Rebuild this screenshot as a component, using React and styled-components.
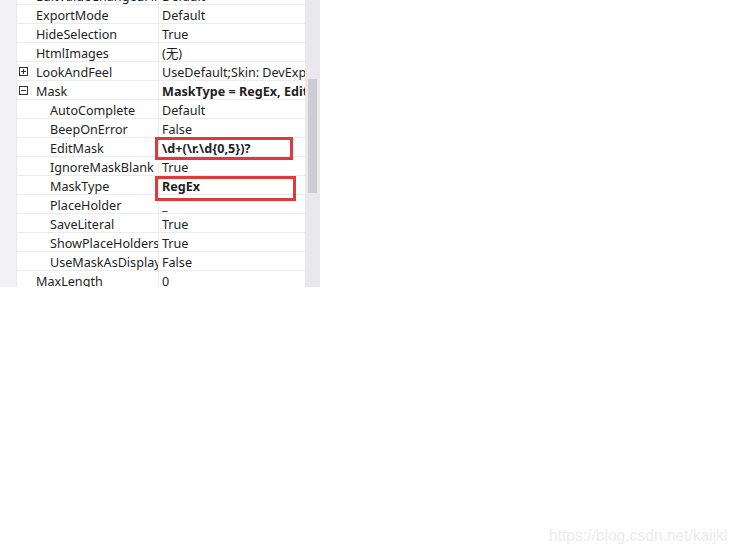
import React from 'react';
import styled, { createGlobalStyle } from 'styled-components';

const GlobalStyle = createGlobalStyle`
  html, body {
    margin: 0;
    padding: 0;
    background: #ffffff;
  }
  body {
    width: 738px;
    height: 554px;
    overflow: hidden;
    position: relative;
    font-family: "Noto Sans", "Noto Sans CJK SC", sans-serif;
  }
`;

const Panel = styled.div`
  position: relative;
  width: 320px;
  height: 287px;
  display: flex;
  overflow: hidden;
  background: #ffffff;
`;

const Grid = styled.div`
  flex: 1;
  overflow: hidden;
  background: linear-gradient(to right, #f3f3f6 0, #f3f3f6 16px, #e9e9ec 16px, #e9e9ec 17px, transparent 17px);
`;

const List = styled.div`
  margin-top: -14px;
  display: flex;
  flex-direction: column;
`;

const Row = styled.div`
  display: flex;
  height: 19px;
  box-sizing: border-box;
  font-size: 12.6px;
  line-height: 17px;
  color: #1e1e1e;
`;

const Toggle = styled.div`
  width: 17px;
  flex-shrink: 0;
`;

const Name = styled.div`
  width: 142px;
  flex-shrink: 0;
  box-sizing: border-box;
  padding: 2px 0 0 ${({ $indent }) => ($indent ? 33 : 19)}px;
  border-bottom: 1px solid #ececee;
  border-right: 1px solid #ececee;
  white-space: nowrap;
  overflow: hidden;
  position: relative;
`;

const Value = styled.div`
  flex: 1;
  box-sizing: border-box;
  padding: 2px 0 0 3px;
  border-bottom: 1px solid #ececee;
  white-space: nowrap;
  overflow: hidden;
  font-weight: ${({ $bold }) => ($bold ? 700 : 400)};
`;

const ExpandBox = styled.span`
  position: absolute;
  left: 2px;
  top: 5px;
  width: 9px;
  height: 9px;
  box-sizing: border-box;
  border: 1px solid #333;
  &::before {
    content: '';
    position: absolute;
    left: 1px;
    right: 1px;
    top: 3px;
    height: 1px;
    background: #333;
  }
  &::after {
    content: '';
    display: ${({ $open }) => ($open ? 'none' : 'block')};
    position: absolute;
    top: 1px;
    bottom: 1px;
    left: 3px;
    width: 1px;
    background: #333;
  }
`;

const Scrollbar = styled.div`
  width: 15px;
  flex-shrink: 0;
  background: #e9e9ec;
  padding-top: 79px;
  display: flex;
  justify-content: center;
`;

const Thumb = styled.div`
  width: 9px;
  height: 114px;
  background: #cdcdd1;
`;

const Highlight = styled.div`
  position: absolute;
  box-sizing: border-box;
  border: 3px solid #e0393c;
`;

const Watermark = styled.div`
  position: absolute;
  left: 549px;
  top: 527px;
  font-family: "Liberation Sans", Arial, sans-serif;
  font-size: 15.6px;
  color: #ececec;
`;

const rows = [
  { name: 'EditValueChangedFiringMode', value: 'Default' },
  { name: 'ExportMode', value: 'Default' },
  { name: 'HideSelection', value: 'True' },
  { name: 'HtmlImages', value: '(无)' },
  { name: 'LookAndFeel', value: 'UseDefault;Skin: DevExpress Style', toggle: 'closed' },
  { name: 'Mask', value: 'MaskType = RegEx, EditMask = \\d+(\\r.\\d{0,5})?', toggle: 'open', bold: true },
  { name: 'AutoComplete', value: 'Default', indent: true },
  { name: 'BeepOnError', value: 'False', indent: true },
  { name: 'EditMask', value: '\\d+(\\r.\\d{0,5})?', indent: true, bold: true },
  { name: 'IgnoreMaskBlank', value: 'True', indent: true },
  { name: 'MaskType', value: 'RegEx', indent: true, bold: true },
  { name: 'PlaceHolder', value: '_', indent: true },
  { name: 'SaveLiteral', value: 'True', indent: true },
  { name: 'ShowPlaceHolders', value: 'True', indent: true },
  { name: 'UseMaskAsDisplayFormat', value: 'False', indent: true },
  { name: 'MaxLength', value: '0' },
];

export default function App() {
  return (
    <>
      <GlobalStyle />
      <Panel>
        <Grid>
          <List>
            {rows.map((r) => (
              <Row key={r.name}>
                <Toggle />
                <Name $indent={r.indent}>
                  {r.toggle && <ExpandBox $open={r.toggle === 'open'} />}
                  {r.name}
                </Name>
                <Value $bold={r.bold}>{r.value}</Value>
              </Row>
            ))}
          </List>
        </Grid>
        <Scrollbar>
          <Thumb />
        </Scrollbar>
        <Highlight style={{ left: 155, top: 137, width: 138, height: 23 }} />
        <Highlight style={{ left: 155, top: 176, width: 141, height: 25 }} />
      </Panel>
      <Watermark>https://blog.csdn.net/kaijkl</Watermark>
    </>
  );
}
